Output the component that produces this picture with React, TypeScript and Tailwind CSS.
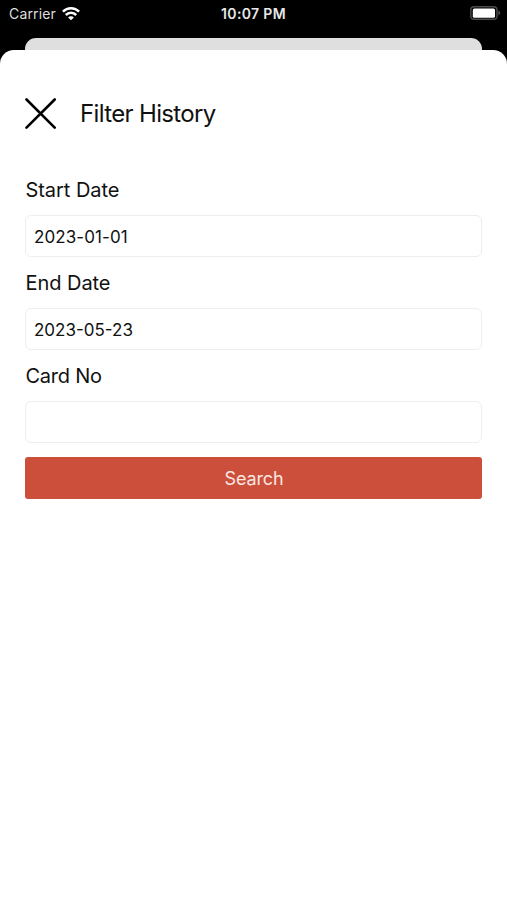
const fields = [
  { id: "start", label: "Start Date", value: "2023-01-01", labelClass: "tracking-[-0.05px]", inputClass: "tracking-[0.1px]" },
  { id: "end", label: "End Date", value: "2023-05-23", labelClass: "tracking-[-0.05px]", inputClass: "tracking-normal" },
  { id: "card", label: "Card No", value: "", labelClass: "tracking-[-0.25px]", inputClass: "" },
];

function WifiIcon() {
  return (
    <svg width="18" height="14" viewBox="0 0 18 14" fill="none" stroke="#fff" strokeWidth="2.5">
      <path d="M0.9 4.7C5.4 0.1 12.6 0.1 17.1 4.7" />
      <path d="M3.8 8C6.7 5.1 11.3 5.1 14.2 8" />
      <path d="M9 13.2L6.1 10.4C7.7 8.9 10.3 8.9 11.9 10.4Z" fill="#fff" stroke="none" />
    </svg>
  );
}

function BatteryIcon() {
  return (
    <svg width="31" height="14" viewBox="0 0 31 14" fill="none">
      <rect x="0.8" y="0.7" width="26.2" height="12.6" rx="3.4" stroke="#4c4c4c" strokeWidth="1.4" />
      <rect x="2.8" y="2.4" width="22.2" height="9.3" rx="1.5" fill="#fff" />
      <path d="M28.3 4.6C30.9 5.6 30.9 8.4 28.3 9.4Z" fill="#4c4c4c" />
    </svg>
  );
}

function StatusBar() {
  return (
    <div className="grid h-[38px] grid-cols-3 items-start text-white">
      <div className="flex items-center gap-[6px] pl-[9px] pt-1">
        <span className="text-[14px] leading-5 tracking-[0.15px] text-[#dedede]">Carrier</span>
        <WifiIcon />
      </div>
      <div className="pt-1 text-center text-[14px] font-semibold leading-5 tracking-[0.35px] text-[#e8e8e8]">10:07 PM</div>
      <div className="flex justify-end pr-[6px] pt-[6px]">
        <BatteryIcon />
      </div>
    </div>
  );
}

export default function App() {
  return (
    <div className="flex h-[900px] w-[507px] flex-col overflow-hidden bg-black font-['Inter',sans-serif] text-[#111]">
      <StatusBar />
      {/* Edge of the screen underneath the sheet */}
      <div className="mx-[25px] h-3 shrink-0 rounded-t-[11px] bg-[#dfdfdf]" />
      <main className="flex-1 rounded-t-[14px] bg-white px-[25px] pt-[48px]">
        <header className="flex h-8 items-center gap-[23px]">
          <button type="button" aria-label="Close">
            <svg width="32" height="32" viewBox="0 0 32 32" fill="none" stroke="#000" strokeWidth="2.6" strokeLinecap="round">
              <path d="M1.5 1.5L29.7 29.7M29.7 1.5L1.5 29.7" />
            </svg>
          </button>
          <h1 className="text-[24px] leading-8 tracking-[-0.65px]">Filter History</h1>
        </header>
        <form className="mt-[46px]">
          {fields.map((field) => (
            <div key={field.id} className="mb-[12.2px]">
              <label htmlFor={field.id} className={`block h-[39px] pl-[0.5px] text-[20px] leading-[28px] ${field.labelClass}`}>
                {field.label}
              </label>
              <input
                id={field.id}
                defaultValue={field.value}
                className={`block h-[42px] w-full rounded-[6px] border border-[#eeeeee] px-2 pt-px text-[17px] outline-none ${field.inputClass}`}
              />
            </div>
          ))}
          <button type="button" className="mt-[1.4px] h-[42px] w-full rounded-[3px] bg-[#cb4f3a] pl-px pt-0.5 text-[18px] tracking-[-0.15px] text-[#fbe6e1]">
            Search
          </button>
        </form>
      </main>
    </div>
  );
}
